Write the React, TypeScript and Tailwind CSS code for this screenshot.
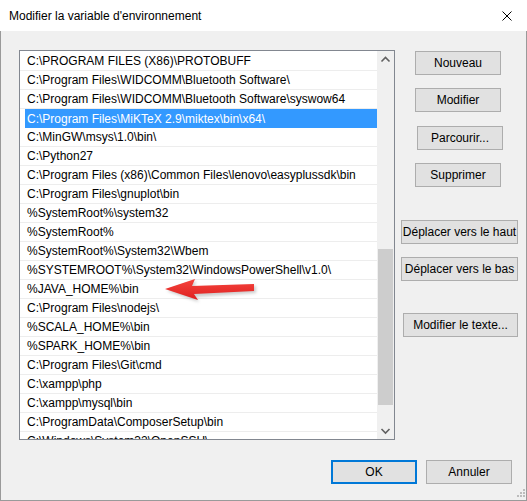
import React from 'react';

const paths: string[] = [
    'C:\\PROGRAM FILES (X86)\\PROTOBUFF',
    'C:\\Program Files\\WIDCOMM\\Bluetooth Software\\',
    'C:\\Program Files\\WIDCOMM\\Bluetooth Software\\syswow64',
    'C:\\Program Files\\MiKTeX 2.9\\miktex\\bin\\x64\\',
    'C:\\MinGW\\msys\\1.0\\bin\\',
    'C:\\Python27',
    'C:\\Program Files (x86)\\Common Files\\lenovo\\easyplussdk\\bin',
    'C:\\Program Files\\gnuplot\\bin',
    '%SystemRoot%\\system32',
    '%SystemRoot%',
    '%SystemRoot%\\System32\\Wbem',
    '%SYSTEMROOT%\\System32\\WindowsPowerShell\\v1.0\\',
    '%JAVA_HOME%\\bin',
    'C:\\Program Files\\nodejs\\',
    '%SCALA_HOME%\\bin',
    '%SPARK_HOME%\\bin',
    'C:\\Program Files\\Git\\cmd',
    'C:\\xampp\\php',
    'C:\\xampp\\mysql\\bin',
    'C:\\ProgramData\\ComposerSetup\\bin',
    'C:\\Windows\\System32\\OpenSSH\\',
];

const SELECTED = 3;

const WinButton: React.FC<{ label: string; className?: string }> = ({ label, className = '' }) => (
    <button
        className={`h-[24px] bg-[#e1e1e1] border border-[#adadad] text-[12px] text-black leading-none flex items-center justify-center ${className}`}
    >
        {label}
    </button>
);

const Chevron: React.FC<{ down?: boolean }> = ({ down }) => (
    <svg width="17" height="17" viewBox="0 0 17 17">
        <path
            d={down ? 'M4.5 7 L8.5 11 L12.5 7' : 'M4.5 10.5 L8.5 6.5 L12.5 10.5'}
            fill="none"
            stroke="#606060"
            strokeWidth="1.6"
        />
    </svg>
);

const PathList: React.FC = () => (
    <div className="w-[376px] h-[390px] border border-[#828790] bg-white flex">
        <div className="flex-1 overflow-hidden pt-[1px]">
            {paths.map((p, i) => {
                const sel = i === SELECTED;
                return (
                    <div key={i} className={`h-[19px] flex ${sel ? '' : 'border-b border-[#ededed]'}`}>
                        <div
                            className={`ml-[5px] flex-1 h-full pl-[2px] flex items-center whitespace-nowrap text-[12px] ${
                                sel ? 'bg-[#3399ff] text-white' : 'text-black'
                            }`}
                        >
                            {p}
                        </div>
                    </div>
                );
            })}
        </div>
        {/* scrollbar */}
        <div className="w-[17px] bg-[#f0f0f0] flex flex-col">
            <div className="h-[17px]">
                <Chevron />
            </div>
            <div className="flex-1 px-[1px]">
                <div className="mt-[181px] h-[156px] bg-[#cdcdcd]" />
            </div>
            <div className="h-[17px]">
                <Chevron down />
            </div>
        </div>
    </div>
);

const RedArrow: React.FC = () => (
    <svg className="absolute left-[160px] top-[272px] pointer-events-none" width="100" height="36" viewBox="160 272 100 36">
        <defs>
            <linearGradient id="arrowFill" x1="0" y1="0" x2="0" y2="1">
                <stop offset="0" stopColor="#f5443d" />
                <stop offset="1" stopColor="#de2020" />
            </linearGradient>
            <filter id="arrowShadow" x="-20%" y="-50%" width="140%" height="200%">
                <feGaussianBlur stdDeviation="1.6" />
            </filter>
        </defs>
        <polygon
            points="167,291 196,281 194,288 256,286 256,293 196,297 199,302"
            fill="rgba(0,0,0,0.2)"
            filter="url(#arrowShadow)"
        />
        <polygon points="165,289 195,279 192,286 254,284 254,291 194,294 198,300" fill="url(#arrowFill)" />
    </svg>
);

const App: React.FC = () => {
    return (
        <div className="relative w-[527px] h-[501px] flex flex-col font-['Liberation_Sans',sans-serif] select-none">
            <header className="h-[31px] bg-white flex items-center justify-between pl-[9px] pr-[15px] shrink-0">
                <span className="text-[12px] text-black">Modifier la variable d'environnement</span>
                <svg width="10" height="10" viewBox="0 0 10 10">
                    <path d="M0.5 0.5 L9.5 9.5 M9.5 0.5 L0.5 9.5" stroke="#000" strokeWidth="1" />
                </svg>
            </header>

            <div className="flex-1 bg-[#f0f0f0] border-l border-r border-b border-[#9a9a9a] pl-[18px] pt-[19px] flex flex-col">
                <div className="flex gap-[6px]">
                    <PathList />
                    <div className="flex flex-col items-start w-[117px]">
                        <WinButton label="Nouveau" className="mt-[1px] ml-[14px] w-[86px]" />
                        <WinButton label="Modifier" className="mt-[13px] ml-[14px] w-[86px]" />
                        <WinButton label="Parcourir..." className="mt-[14px] ml-[16px] w-[86px]" />
                        <WinButton label="Supprimer" className="mt-[13px] ml-[14px] w-[86px]" />
                        <WinButton label="Déplacer vers le haut" className="mt-[33px] w-[117px]" />
                        <WinButton label="Déplacer vers le bas" className="mt-[13px] w-[117px]" />
                        <WinButton label="Modifier le texte..." className="mt-[32px] ml-[2px] w-[115px]" />
                    </div>
                </div>

                <div className="mt-[20px] flex justify-end gap-[9px] pr-[14px]">
                    <button className="w-[86px] h-[24px] bg-[#e1e1e1] border-2 border-[#0078d7] text-[12px] text-black flex items-center justify-center">
                        OK
                    </button>
                    <WinButton label="Annuler" className="w-[86px]" />
                </div>
            </div>

            <RedArrow />

            {/* resize grip */}
            <svg className="absolute right-[2px] bottom-[2px]" width="10" height="10" viewBox="0 0 10 10">
                {[
                    [8, 0],
                    [5, 3],
                    [8, 3],
                    [2, 6],
                    [5, 6],
                    [8, 6],
                ].map(([x, y], i) => (
                    <rect key={i} x={x} y={y} width="2" height="2" fill="#bcbcbc" />
                ))}
            </svg>
        </div>
    );
};

export default App;
